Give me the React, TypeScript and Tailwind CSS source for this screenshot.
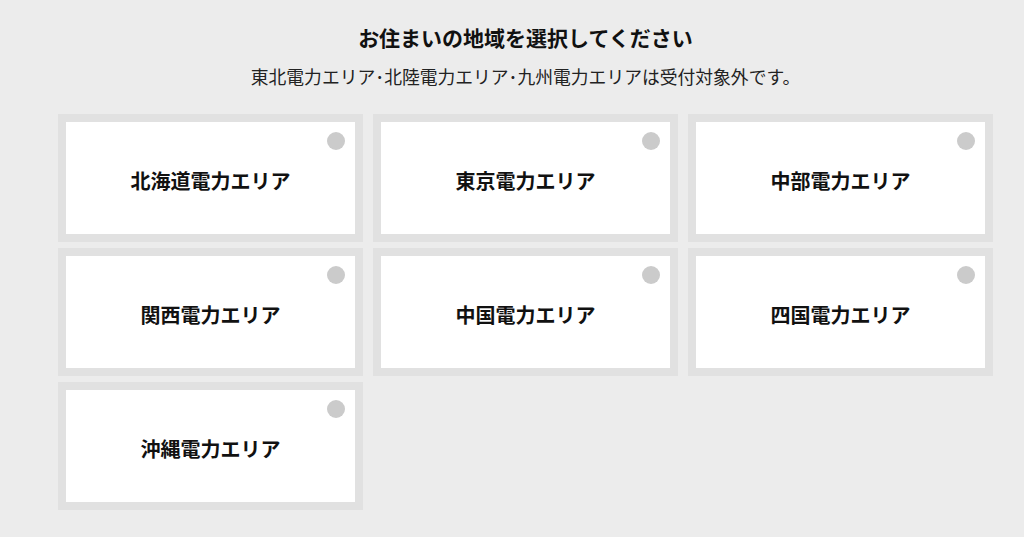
import React from "react";

const areas = [
  "北海道電力エリア",
  "東京電力エリア",
  "中部電力エリア",
  "関西電力エリア",
  "中国電力エリア",
  "四国電力エリア",
  "沖縄電力エリア",
];

export default function App() {
  return (
    <div
      className="min-h-[537px] w-full bg-[#ececec] text-[#111]"
      style={{ fontFamily: '"Noto Sans CJK JP", "Noto Sans", sans-serif' }}
    >
      <div className="ml-[58px] w-[935px] pt-[22px]">
        <h1 className="text-center text-[21px] font-bold leading-[30px] text-[#111]">
          お住まいの地域を選択してください
        </h1>
        <p className="mt-[11px] text-center text-[17.8px] leading-[26px] text-[#222]">
          東北電力エリア･北陸電力エリア･九州電力エリアは受付対象外です。
        </p>
        <div className="mt-[25px] grid grid-cols-[305px_305px_305px] gap-x-[10px] gap-y-[6px]">
          {areas.map((a) => (
            <label
              key={a}
              className="relative flex h-[128px] cursor-pointer items-center justify-center border-8 border-[#e1e1e1] bg-white"
            >
              <span className="absolute right-[10px] top-[10px] h-[18px] w-[18px] rounded-full bg-[#cbcbcb]" />
              <span className="pt-[5px] text-[20px] font-bold leading-[28px] text-[#111]">{a}</span>
            </label>
          ))}
        </div>
      </div>
    </div>
  );
}
